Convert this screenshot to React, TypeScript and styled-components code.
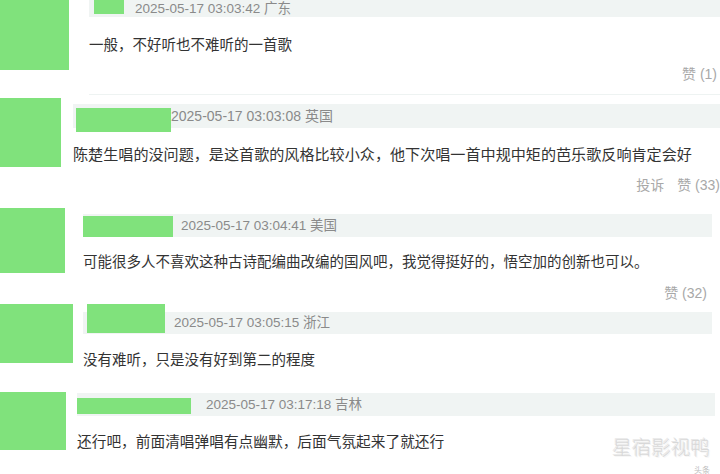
import styled, { createGlobalStyle } from "styled-components";

const GlobalStyle = createGlobalStyle`
  html, body {
    margin: 0;
    padding: 0;
    background: #fff;
  }
  body {
    font-family: "Liberation Sans", "Noto Sans CJK SC", sans-serif;
  }
`;

type Box = { w: number; h: number; x: number; y: number };

type CommentData = {
  height: number;
  avatar: Box;
  bodyGap: number;
  bodyRight: number;
  divider?: boolean;
  bar: { top: number; height: number };
  name: Box;
  timeGap: number;
  timeSize: number;
  time: string;
  textTop: number;
  textSize: number;
  text: string;
  actions?: { top: number; right: number; items: string[] };
};

const comments: CommentData[] = [
  {
    height: 95,
    avatar: { w: 69, h: 70, x: 0, y: 0 },
    bodyGap: 20,
    bodyRight: 0,
    divider: true,
    bar: { top: 0, height: 17 },
    name: { w: 30, h: 14, x: 5, y: 0 },
    timeGap: 11,
    timeSize: 13.5,
    time: "2025-05-17 03:03:42 广东",
    textTop: 18,
    textSize: 14.5,
    text: "一般，不好听也不难听的一首歌",
    actions: { top: 9, right: 3, items: ["赞 (1)"] },
  },
  {
    height: 105,
    avatar: { w: 61, h: 69, x: 0, y: 3 },
    bodyGap: 12,
    bodyRight: 0,
    bar: { top: 9, height: 24 },
    name: { w: 95, h: 24, x: 3, y: 4 },
    timeGap: 0,
    timeSize: 14,
    time: "2025-05-17 03:03:08 英国",
    textTop: 17,
    textSize: 15.1,
    text: "陈楚生唱的没问题，是这首歌的风格比较小众，他下次唱一首中规中矩的芭乐歌反响肯定会好",
    actions: { top: 10, right: 0, items: ["投诉", "赞 (33)"] },
  },
  {
    height: 100,
    avatar: { w: 65, h: 65, x: 0, y: 8 },
    bodyGap: 18,
    bodyRight: 8,
    bar: { top: 14, height: 23 },
    name: { w: 90, h: 21, x: 0, y: 2 },
    timeGap: 8,
    timeSize: 13.5,
    time: "2025-05-17 03:04:41 美国",
    textTop: 15,
    textSize: 14.5,
    text: "可能很多人不喜欢这种古诗配编曲改编的国风吧，我觉得挺好的，悟空加的创新也可以。",
    actions: { top: 11, right: 5, items: ["赞 (32)"] },
  },
  {
    height: 85,
    avatar: { w: 73, h: 59, x: 0, y: 4 },
    bodyGap: 10,
    bodyRight: 8,
    bar: { top: 12, height: 22 },
    name: { w: 78, h: 29, x: 4, y: -8 },
    timeGap: 9,
    timeSize: 13.5,
    time: "2025-05-17 03:05:15 浙江",
    textTop: 16,
    textSize: 14.5,
    text: "没有难听，只是没有好到第二的程度",
  },
  {
    height: 89,
    avatar: { w: 66, h: 58, x: 0, y: 7 },
    bodyGap: 11,
    bodyRight: 5,
    bar: { top: 8, height: 23 },
    name: { w: 114, h: 16, x: 0, y: 5 },
    timeGap: 15,
    timeSize: 13.5,
    time: "2025-05-17 03:17:18 吉林",
    textTop: 16,
    textSize: 14.7,
    text: "还行吧，前面清唱弹唱有点幽默，后面气氛起来了就还行",
  },
];

function Comment({ c }: { c: CommentData }) {
  return (
    <Row $h={c.height}>
      <Avatar $w={c.avatar.w} $h={c.avatar.h} $top={c.avatar.y} />
      <Body $gap={c.bodyGap} $right={c.bodyRight} $divider={!!c.divider}>
        <MetaBar $top={c.bar.top} $h={c.bar.height}>
          <NameMask
            $w={c.name.w}
            $h={c.name.h}
            $left={c.name.x}
            $top={c.name.y}
          />
          <Time $gap={c.timeGap} $size={c.timeSize} $h={c.bar.height}>
            {c.time}
          </Time>
        </MetaBar>
        <Text $top={c.textTop} $size={c.textSize}>
          {c.text}
        </Text>
        {c.actions && (
          <Actions $top={c.actions.top} $right={c.actions.right}>
            {c.actions.items.map((a) => (
              <span key={a}>{a}</span>
            ))}
          </Actions>
        )}
      </Body>
    </Row>
  );
}

export default function App() {
  return (
    <>
      <GlobalStyle />
      <Page>
        {comments.map((c) => (
          <Comment key={c.time} c={c} />
        ))}
        <Watermark>
          <span>星宿影视鸭</span>
          <small>头条</small>
        </Watermark>
      </Page>
    </>
  );
}

const Page = styled.main`
  position: relative;
  width: 720px;
  height: 474px;
  overflow: hidden;
  display: flex;
  flex-direction: column;
  background: #fff;
`;

const Row = styled.section<{ $h: number }>`
  display: flex;
  align-items: stretch;
  height: ${(p) => p.$h}px;
  flex-shrink: 0;
`;

const Avatar = styled.div<{ $w: number; $h: number; $top: number }>`
  flex-shrink: 0;
  width: ${(p) => p.$w}px;
  height: ${(p) => p.$h}px;
  margin-top: ${(p) => p.$top}px;
  background: #80e27c;
`;

const Body = styled.div<{ $gap: number; $right: number; $divider: boolean }>`
  flex: 1;
  min-width: 0;
  display: flex;
  flex-direction: column;
  margin-left: ${(p) => p.$gap}px;
  margin-right: ${(p) => p.$right}px;
  box-sizing: border-box;
  border-bottom: ${(p) => (p.$divider ? "1px solid #eef3f2" : "none")};
`;

const MetaBar = styled.div<{ $top: number; $h: number }>`
  display: flex;
  align-items: flex-start;
  flex-shrink: 0;
  height: ${(p) => p.$h}px;
  margin-top: ${(p) => p.$top}px;
  background: #f0f4f3;
`;

const NameMask = styled.div<{
  $w: number;
  $h: number;
  $left: number;
  $top: number;
}>`
  flex-shrink: 0;
  width: ${(p) => p.$w}px;
  height: ${(p) => p.$h}px;
  margin-left: ${(p) => p.$left}px;
  margin-top: ${(p) => p.$top}px;
  background: #80e27c;
`;

const Time = styled.span<{ $gap: number; $size: number; $h: number }>`
  margin-left: ${(p) => p.$gap}px;
  font-size: ${(p) => p.$size}px;
  line-height: ${(p) => p.$h}px;
  color: #8a8a8a;
  white-space: nowrap;
`;

const Text = styled.p<{ $top: number; $size: number }>`
  margin: ${(p) => p.$top}px 0 0;
  font-size: ${(p) => p.$size}px;
  line-height: 20px;
  color: #333;
  white-space: nowrap;
`;

const Actions = styled.div<{ $top: number; $right: number }>`
  display: flex;
  justify-content: flex-end;
  gap: 13px;
  margin-top: ${(p) => p.$top}px;
  margin-right: ${(p) => p.$right}px;
  font-size: 14px;
  line-height: 20px;
  color: #a8a8a8;
  white-space: nowrap;
`;

const Watermark = styled.div`
  position: absolute;
  right: 10px;
  top: 438px;
  display: flex;
  flex-direction: column;
  align-items: flex-end;
  color: #d8d8d8;
  span {
    font-size: 19.5px;
    line-height: 20px;
    font-weight: 300;
    text-shadow: 1px 1px 0 #f6f6f6, -1px -1px 0 #e8e8e8;
  }
  small {
    margin-top: 9px;
    font-size: 8px;
    line-height: 8px;
    color: #bdbdbd;
  }
`;
